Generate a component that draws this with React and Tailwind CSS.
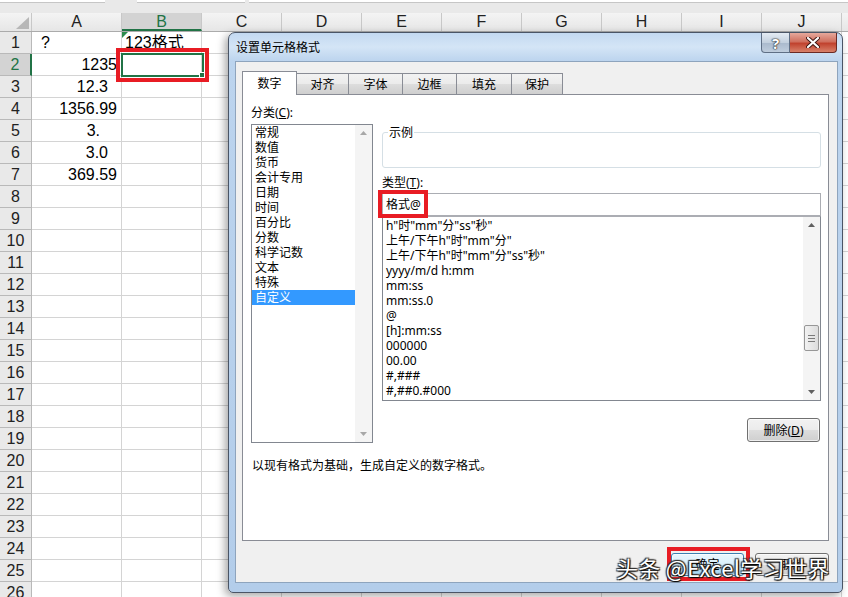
import React from 'react';

const ui = { fontFamily: '"Noto Sans", "Noto Sans CJK SC", sans-serif' };
const sheetFont = { fontFamily: '"Liberation Sans", "Noto Sans CJK SC", sans-serif' };

const cols = ['A', 'B', 'C', 'D', 'E', 'F', 'G', 'H', 'I', 'J', 'K'];

// column A cells: text + right padding (custom number formats pad differently)
const colA = {
  1: { text: '?', left: true },
  2: { text: '1235', pr: 'pr-[4px]' },
  3: { text: '12.3', pr: 'pr-[13px]' },
  4: { text: '1356.99', pr: 'pr-[4px]' },
  5: { text: '3.', pr: 'pr-[21px]' },
  6: { text: '3.0', pr: 'pr-[13px]' },
  7: { text: '369.59', pr: 'pr-[4px]' },
};

const categories = ['常规', '数值', '货币', '会计专用', '日期', '时间', '百分比', '分数', '科学记数', '文本', '特殊', '自定义'];

const types = [
  'h"时"mm"分"ss"秒"',
  '上午/下午h"时"mm"分"',
  '上午/下午h"时"mm"分"ss"秒"',
  'yyyy/m/d h:mm',
  'mm:ss',
  'mm:ss.0',
  '@',
  '[h]:mm:ss',
  '000000',
  '00.00',
  '#,###',
  '#,##0.#000',
];

const tabs = [
  { label: '数字', w: 'w-[55px]' },
  { label: '对齐', w: 'w-[52px]' },
  { label: '字体', w: 'w-[54px]' },
  { label: '边框', w: 'w-[54px]' },
  { label: '填充', w: 'w-[55px]' },
  { label: '保护', w: 'w-[51px]' },
];

function Arrow({ up, className }) {
  return (
    <svg width="7" height="4" viewBox="0 0 7 4" className={className}>
      {up ? <path d="M0 4 L3.5 0 L7 4 Z" fill="currentColor" /> : <path d="M0 0 L3.5 4 L7 0 Z" fill="currentColor" />}
    </svg>
  );
}

function Sheet() {
  const rows = Array.from({ length: 26 }, (_, i) => i + 1);
  return (
    <div className="flex flex-col" style={sheetFont}>
      {/* formula bar remnants */}
      <div className="flex h-[13px] bg-[#e9e9e9]">
        <div className="h-[3px] w-[105px] border-b border-[#c6c6c6] bg-white" />
        <div className="ml-[32px] h-[3px] w-[108px] border-b border-[#c6c6c6] bg-white" />
        <div className="ml-[4px] h-[3px] flex-1 border-b border-[#c6c6c6] bg-white" />
      </div>
      {/* column header */}
      <div className="flex h-[19px] border-b border-[#ababab] bg-[linear-gradient(#f4f4f4,#e6e6e6)] text-[16px] leading-[18px] text-[#222]">
        <div className="flex w-[32px] shrink-0 items-end justify-end border-r border-[#c8c8c8] pb-[2px] pr-[2px]">
          <svg width="13" height="12" viewBox="0 0 13 12">
            <path d="M13 0 L13 12 L0 12 Z" fill="#b7b7b7" />
          </svg>
        </div>
        {cols.map((c) => (
          <div
            key={c}
            className={
              c === 'B'
                ? 'flex w-[80px] shrink-0 justify-center border-r border-b-2 border-r-[#c8c8c8] border-b-[#217346] bg-[#d3d3d3] text-[#217346]'
                : c === 'A'
                ? 'flex w-[90px] shrink-0 justify-center border-r border-[#c8c8c8]'
                : 'flex w-[80px] shrink-0 justify-center border-r border-[#c8c8c8]'
            }
          >
            {c}
          </div>
        ))}
      </div>
      {rows.map((r) => (
        <div key={r} className="flex h-[22px] shrink-0 text-[16px] leading-[21px] text-black">
          <div
            className={
              r === 2
                ? 'w-[32px] shrink-0 border-b border-r-2 border-b-[#b9b9b9] border-r-[#217346] bg-[#d3d3d3] text-center text-[#217346]'
                : 'w-[32px] shrink-0 border-b border-r border-[#b9b9b9] bg-[#e9e9e9] text-center text-[#222]'
            }
          >
            {r}
          </div>
          <div
            className={
              'w-[90px] shrink-0 overflow-visible whitespace-nowrap border-b border-r border-[#d4d4d4] ' +
              (colA[r] ? (colA[r].left ? 'pl-[9px] text-left' : 'text-right ' + colA[r].pr) : '')
            }
          >
            {colA[r] ? colA[r].text : ''}
          </div>
          <div className="relative w-[80px] shrink-0 whitespace-nowrap border-b border-r border-[#d4d4d4] pl-[3px]">
            {r === 1 && (
              <>
                <svg width="6" height="6" viewBox="0 0 6 6" className="absolute left-0 top-0">
                  <path d="M0 0 L6 0 L0 6 Z" fill="#2e8b4e" />
                </svg>
                123格式
              </>
            )}
          </div>
          {cols.slice(2).map((c) => (
            <div key={c} className="w-[80px] shrink-0 border-b border-r border-[#d4d4d4]" />
          ))}
        </div>
      ))}
    </div>
  );
}

function WinButton({ children, w, primary }) {
  return (
    <div
      className={
        primary
          ? 'flex h-[23px] items-center justify-center rounded-[3px] border border-[#3c7fb1] bg-[linear-gradient(#eaf6fd_0%,#d9f0fc_50%,#bee6fd_51%,#a7d9f5_100%)] text-[12px] leading-[15px] text-black shadow-[inset_0_0_0_1px_#ffffffaa] ' + w
          : 'flex h-[23px] items-center justify-center rounded-[3px] border border-[#707070] bg-[linear-gradient(#f2f2f2_0%,#ebebeb_50%,#dddddd_51%,#cfcfcf_100%)] text-[12px] leading-[15px] text-black shadow-[inset_0_0_0_1px_#ffffffaa] ' + w
      }
    >
      {children}
    </div>
  );
}

function Dialog() {
  return (
    <div
      className="absolute left-[228px] top-[32px] h-[561px] w-[615px] rounded-t-[7px] rounded-b-[5px] border border-[#4a5566] bg-[linear-gradient(180deg,#c3d9f1_0px,#d4e5f6_14px,#bcd4ee_28px,#b3cdea_100%)] shadow-[-3px_3px_8px_rgba(0,0,0,0.35)]"
      style={ui}
    >
      {/* caption buttons */}
      <div className="absolute right-[5px] top-0 flex">
        <div className="flex h-[20px] w-[29px] items-center justify-center rounded-bl-[4px] border border-t-0 border-[#5f6f85] bg-[linear-gradient(#e4ebf3,#c3d0de_50%,#a9b9cc_51%,#bfcddd)]">
          <span className="text-[15px] font-bold leading-[16px] text-white [text-shadow:0_0_1px_#222,0_0_1px_#222,0_0_2px_#333]">?</span>
        </div>
        <div className="flex h-[20px] w-[47px] items-center justify-center rounded-br-[4px] border border-l-0 border-t-0 border-[#6b2a24] bg-[linear-gradient(#e6a99c,#d0705f_45%,#c1432f_55%,#d8816a)]">
          <svg width="14" height="11" viewBox="0 0 14 11">
            <path d="M2 1 L12 10 M12 1 L2 10" stroke="#3b1410" strokeWidth="4" strokeLinecap="round" />
            <path d="M2 1 L12 10 M12 1 L2 10" stroke="#ffffff" strokeWidth="2.2" strokeLinecap="round" />
          </svg>
        </div>
      </div>

      {/* title */}
      <div className="flex h-[28px] items-center pl-[7px] text-[12px] leading-[15px] text-black">设置单元格格式</div>

      {/* client area */}
      <div className="ml-[6px] flex h-[522px] w-[603px] flex-col border border-[#8ea4bd] bg-[#f0f0f0] pl-[6px] pt-[9px]">
        {/* tabs */}
        <div className="flex h-[23px] items-end text-[12px] leading-[15px] text-black">
          {tabs.map((t, i) =>
            i === 0 ? (
              <div key={t.label} className={'relative z-10 -mb-px flex h-[24px] items-center justify-center border border-b-0 border-[#898c95] bg-white ' + t.w}>
                {t.label}
              </div>
            ) : (
              <div key={t.label} className={'flex h-[21px] items-center justify-center border border-b-0 border-l-0 border-[#898c95] bg-[linear-gradient(#f2f2f2_0%,#ebebeb_50%,#dddddd_51%,#cfcfcf_100%)] ' + t.w}>
                {t.label}
              </div>
            )
          )}
        </div>

        {/* tab panel */}
        <div className="flex h-[447px] w-[587px] flex-col border border-[#898c95] bg-white pl-[8px] pt-[10px] text-[12px] leading-[15px] text-black">
          <div className="flex items-start">
            {/* category */}
            <div className="flex flex-col">
              <div>
                分类(<span className="underline">C</span>):
              </div>
              <div className="mt-[4px] flex h-[319px] w-[122px] border border-[#828790] bg-white">
                <div className="flex-1 pt-0">
                  {categories.map((c) => (
                    <div key={c} className={c === '自定义' ? 'h-[15px] bg-[#3399ff] pl-[3px] text-white' : 'h-[15px] pl-[3px]'}>
                      {c}
                    </div>
                  ))}
                </div>
                <div className="flex w-[17px] flex-col items-center justify-between bg-[#f4f4f4] py-[6px] text-[#a7a7a7]">
                  <Arrow up />
                  <Arrow />
                </div>
              </div>
            </div>

            {/* right side */}
            <div className="ml-[9px] flex w-[439px] flex-col pt-[20px]">
              <fieldset className="h-[43px] rounded-[3px] border border-[#d5dfe5] px-[5px]">
                <legend className="px-[1px]">示例</legend>
              </fieldset>
              <div className="mt-[7px]">
                类型(<span className="underline">T</span>):
              </div>
              <div className="mt-[3px] flex h-[23px] items-center border border-[#abadb3] pl-[3px]">格式@</div>
              <div className="flex h-[185px] border border-[#828790] border-t-[#abadb3]">
                <div className="flex-1 whitespace-nowrap pt-[1px]">
                  {types.map((t) => (
                    <div key={t} className="h-[15px] pl-[3px]">
                      {t}
                    </div>
                  ))}
                </div>
                <div className="flex w-[17px] flex-col items-center bg-[#f4f4f4] py-[6px] text-[#606060]">
                  <Arrow up />
                  <div className="mt-[98px] flex h-[26px] w-[15px] flex-col items-center justify-center gap-[2px] rounded-[2px] border border-[#979797] bg-[linear-gradient(90deg,#f2f2f2,#dcdcdc)]">
                    <div className="h-px w-[7px] bg-[#7a7a7a]" />
                    <div className="h-px w-[7px] bg-[#7a7a7a]" />
                    <div className="h-px w-[7px] bg-[#7a7a7a]" />
                  </div>
                  <div className="flex-1" />
                  <Arrow />
                </div>
              </div>
              <div className="mt-[17px] flex justify-end pr-[1px]">
                <WinButton w="w-[73px] h-[24px]">
                  删除(<span className="underline">D</span>)
                </WinButton>
              </div>
            </div>
          </div>
          <div className="mt-[15px] pl-[1px]">以现有格式为基础，生成自定义的数字格式。</div>
        </div>

        {/* bottom buttons */}
        <div className="mt-[12px] flex w-[587px] justify-end gap-[11px] pr-0">
          <WinButton w="w-[73px]" primary>
            确定
          </WinButton>
          <WinButton w="w-[74px]">取消</WinButton>
        </div>
      </div>
    </div>
  );
}

export default function App() {
  return (
    <div className="relative h-[597px] w-[848px] overflow-hidden bg-white">
      <Sheet />
      {/* active cell B2 */}
      <div className="absolute left-[121px] top-[53px] h-[24px] w-[83px] border-2 border-[#217346]">
        <div className="absolute -bottom-[3px] -right-[3px] h-[6px] w-[6px] border border-white bg-[#217346]" />
      </div>
      <Dialog />
      {/* red annotation boxes */}
      <div className="absolute left-[116px] top-[48px] h-[34px] w-[93px] border-4 border-[#e81c24]" />
      <div className="absolute left-[378px] top-[190px] h-[28px] w-[50px] border-4 border-[#e81c24]" />
      <div className="absolute left-[667px] top-[547px] h-[34px] w-[83px] border-4 border-[#e81c24]" />
      {/* watermark */}
      <div
        className="absolute left-[616px] top-[553px] whitespace-nowrap text-[22px] leading-[29px] tracking-[0.3px] text-white [text-shadow:1px_1px_1px_#000,-1px_-1px_1px_#333,1px_-1px_1px_#333,-1px_1px_1px_#333]"
        style={{ fontFamily: '"Noto Sans CJK SC", sans-serif' }}
      >
        头条 @Excel学习世界
      </div>
    </div>
  );
}
